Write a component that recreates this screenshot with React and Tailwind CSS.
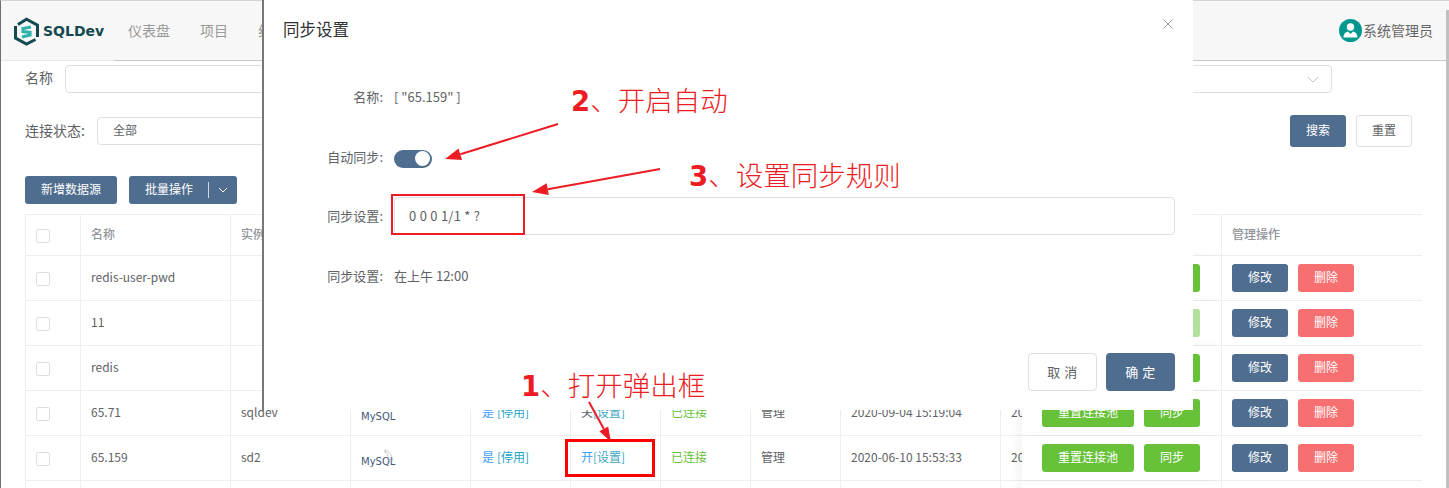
import React from "react";

const cols = "grid grid-cols-[55px_150px_120px_120px_100px_90px_90px_90px_160px_21px_200px_199px]";
const cell = "flex items-center px-[10px] pb-[2px] border-r border-[#ebeef5] min-w-0 whitespace-nowrap overflow-hidden";
const boxCell = "flex items-center px-[10px] pt-[2px] border-r border-[#ebeef5]";

function Check() {
  return <span className="block w-[14px] h-[14px] rounded-[2px] border border-[#dcdfe6] bg-white" />;
}

function Btn({ className = "", children }) {
  return (
    <button className={"h-[28px] pb-[2px] rounded-[3px] text-white text-[12px] flex items-center justify-center shrink-0 " + className}>
      {children}
    </button>
  );
}

function MySql({ fin }) {
  return (
    <div className="relative w-[36px] h-[24px] flex items-end">
      {fin && (
        <svg className="absolute left-[23px] top-[2px]" width="12" height="14" viewBox="0 0 12 14" fill="none">
          <path d="M1 1 C5 2 8 6 9 12 M1 1 C2 4 5 6 5 11 M1 1 L1 4" stroke="#b4b7c0" strokeWidth="0.7" />
        </svg>
      )}
      <span className="font-['DejaVu_Sans',sans-serif] text-[10px] leading-[11px] text-[#41597a] mb-[4px]">MySQL</span>
    </div>
  );
}

function Row({ name, inst, logo, fin, on, date, light }) {
  return (
    <div className={cols + " h-[45px] border-b border-[#ebeef5] text-[12px] text-[#606266]"}>
      <div className={boxCell}><Check /></div>
      <div className={cell}>{name}</div>
      <div className={cell}>{inst}</div>
      <div className={boxCell}>{logo && <MySql fin={fin} />}</div>
      <div className={cell + " pl-[11px]"}>
        {date && <><span className="text-[#409eff]">是</span><span className="text-[#1ba3c4] ml-[3px]">[停用]</span></>}
      </div>
      <div className={cell}>
        {date && <><span className={on ? "text-[#409eff]" : "text-[#606266]"}>{on ? "开" : "关"}</span><span className="text-[#3fa6c4]">[设置]</span></>}
      </div>
      <div className={cell + " text-[#67c23a]"}>{date && "已连接"}</div>
      <div className={cell}>{date && "管理"}</div>
      <div className={cell}>{date}</div>
      <div className={cell + " !overflow-visible border-r-0"}>{date && "2020"}</div>
      <div className="flex items-center gap-[10px] pl-[20px] bg-white border-r border-[#ebeef5] shadow-[-6px_0_8px_rgba(0,0,0,0.04)] z-10">
        <Btn className="w-[92px] bg-[#67c23a]">{date && "重置连接池"}</Btn>
        <Btn className={"w-[56px] " + (light ? "bg-[#b3e19d]" : "bg-[#67c23a]")}>{date && "同步"}</Btn>
      </div>
      <div className="flex items-center gap-[10px] pl-[10px]">
        <Btn className="w-[56px] bg-[#4f6d8e]">修改</Btn>
        <Btn className="w-[56px] bg-[#f76f70]">删除</Btn>
      </div>
    </div>
  );
}

function Arrow({ x1, y1, x2, y2, len = 16, half = 6, w = 2 }) {
  const dx = x2 - x1, dy = y2 - y1, d = Math.hypot(dx, dy);
  const ux = dx / d, uy = dy / d;
  const bx = x2 - ux * len, by = y2 - uy * len;
  const pts = `${x2},${y2} ${bx - uy * half},${by + ux * half} ${bx + uy * half},${by - ux * half}`;
  return (
    <g>
      <line x1={x1} y1={y1} x2={bx} y2={by} stroke="#ed1c24" strokeWidth={w} />
      <polygon points={pts} fill="#ed1c24" />
    </g>
  );
}

function Note({ className, n, text }) {
  return (
    <div className={"absolute whitespace-nowrap text-[27.5px] leading-[32px] font-light text-[#ed1c24] z-40 " + className}>
      <span className="font-['DejaVu_Sans',sans-serif] font-bold">{n}</span>、{text}
    </div>
  );
}

function FormRow({ label, className = "", children }) {
  return (
    <div className={"flex items-center h-[40px] " + className}>
      <div className="w-[119px] text-right text-[13px] text-[#606266] shrink-0">{label}:</div>
      <div className="flex-1 flex items-center ml-[11px] mr-[18px] text-[13px] text-[#606266]">{children}</div>
    </div>
  );
}

export default function App() {
  return (
    <div className="relative w-[1449px] h-[488px] overflow-hidden bg-white font-['Noto_Sans_CJK_SC','Noto_Sans',sans-serif]">
      <div className="h-full border-l border-t border-l-[#707070] border-t-[#d4d4d8] flex flex-col">
        {/* header */}
        <header className="h-[60px] shrink-0 bg-[#f7f7f7] border-b border-[#c9c9c9] flex items-center justify-between pr-[16px]">
          <div className="flex items-center h-full">
            <div className="w-[113px] h-[60px] -mb-px border-b border-[#e8e8e8] flex items-center pl-[12px] gap-[3px] pt-[1px]">
              <svg width="27" height="29" viewBox="0 0 27 29" fill="none">
                <path d="M5 7.5 L13.5 2.2 L24.5 8.2 V20 M22.5 22.5 L13.5 27 L2.5 21 V9" stroke="#134a50" strokeWidth="3" />
                <path d="M18 10 L10 11.5 V14.5 L17 15.5 V18 L9 20" stroke="#2db5ad" strokeWidth="3.2" />
              </svg>
              <span className="font-['DejaVu_Sans',sans-serif] font-bold text-[14px] text-[#134a50]">SQLDev</span>
            </div>
            <nav className="flex items-center gap-[30px] ml-[14px] text-[14px] text-[#999999]">
              <span>仪表盘</span>
              <span>项目</span>
              <span>组</span>
            </nav>
          </div>
          <div className="flex items-center gap-px text-[14px] text-[#666666]">
            <svg width="23" height="23" viewBox="0 0 23 23">
              <circle cx="11.5" cy="11.5" r="11.5" fill="#00978f" />
              <circle cx="11.5" cy="8" r="3.7" fill="#fff" />
              <path d="M4.5 18.5 C4.5 14.5 7 13 9 12.5 L11.5 15 L14 12.5 C16 13 18.5 14.5 18.5 18.5 Z" fill="#fff" />
            </svg>
            <span>系统管理员</span>
          </div>
        </header>

        <main className="pl-[24px] pr-[26px]">
          <div className="flex items-center mt-[4px] h-[28px]">
            <span className="text-[14px] text-[#606266] w-[40px] shrink-0 pb-[3px]">名称</span>
            <div className="flex-1 h-[28px] mr-[91px] border border-[#dcdfe6] rounded-[4px] flex items-center justify-end pr-[12px]">
              <svg width="12" height="7" viewBox="0 0 12 7" fill="none"><path d="M1 1 L6 6 L11 1" stroke="#c0c4cc" strokeWidth="1" /></svg>
            </div>
          </div>

          <div className="flex items-center justify-between mt-[22px] h-[32px]">
            <div className="flex items-center">
              <span className="text-[14px] text-[#606266] w-[72px] pb-[2px]">连接状态:</span>
              <div className="w-[300px] h-[28px] pb-[2px] border border-[#dcdfe6] rounded-[4px] pl-[15px] flex items-center text-[12px] text-[#606266]">全部</div>
            </div>
            <div className="flex items-center gap-[10px] mr-[11px]">
              <button className="w-[56px] h-[32px] pb-[2px] rounded-[3px] bg-[#4f6d8e] text-white text-[12px]">搜索</button>
              <button className="w-[56px] h-[32px] pb-[2px] rounded-[3px] border border-[#dcdfe6] bg-white text-[#606266] text-[12px]">重置</button>
            </div>
          </div>

          <div className="flex items-center gap-[12px] mt-[29px]">
            <Btn className="w-[92px] bg-[#4f6d8e]">新增数据源</Btn>
            <div className="w-[108px] h-[28px] rounded-[3px] bg-[#4f6d8e] text-white text-[12px] flex items-center pl-[16px]">
              <span className="w-[63px] pb-[2px]">批量操作</span>
              <span className="w-px h-[16px] bg-[#cfd8e2]" />
              <svg className="ml-[9px]" width="10" height="6" viewBox="0 0 10 6" fill="none"><path d="M1 1 L5 5 L9 1" stroke="#fff" strokeWidth="1" /></svg>
            </div>
          </div>

          <div className="mt-[10px] w-[1397px] border-l border-t border-[#ebeef5]">
            <div className={cols + " h-[41px] border-b border-[#ebeef5] text-[12px] text-[#909399] font-medium"}>
              <div className={boxCell}><Check /></div>
              <div className={cell}>名称</div>
              <div className={cell}>实例</div>
              <div className={cell} />
              <div className={cell} />
              <div className={cell} />
              <div className={cell} />
              <div className={cell} />
              <div className={cell} />
              <div className={cell + " border-r-0"} />
              <div className="bg-white border-r border-[#ebeef5]" />
              <div className="flex items-center pl-[10px] pb-[2px]">管理操作</div>
            </div>
            <Row name="redis-user-pwd" />
            <Row name="11" light />
            <Row name="redis" />
            <Row name="65.71" inst="sqldev" logo date="2020-09-04 15:19:04" />
            <Row name="65.159" inst="sd2" logo fin on date="2020-06-10 15:53:33" />
            <div className={cols + " h-[45px]"}>
              <div className={cell} /><div className={cell} /><div className={cell} /><div className={cell} /><div className={cell} />
              <div className={cell} /><div className={cell} /><div className={cell} /><div className={cell} /><div className={cell + " border-r-0"} />
              <div className="bg-white border-r border-[#ebeef5] shadow-[-6px_0_8px_rgba(0,0,0,0.04)]" /><div />
            </div>
          </div>
        </main>
      </div>

      {/* scrollbar */}
      <div className="absolute right-0 top-[10px] bottom-0 w-[3px] bg-[#c0c0c0]" />

      {/* dialog */}
      <div className="absolute left-[262px] top-0 w-[931px] h-[411px] z-20 flex flex-col">
        <div className="h-[410px] bg-white border-l-2 border-[#777777] flex flex-col">
          <div className="flex items-start justify-between pl-[19px] pr-[20px] pt-[17px]">
            <h2 className="text-[16.5px] leading-[24px] text-[#303133] font-normal">同步设置</h2>
            <svg className="mt-[2px]" width="10" height="10" viewBox="0 0 10 10" fill="none"><path d="M0.5 0.5 L9.5 9.5 M9.5 0.5 L0.5 9.5" stroke="#9a9da3" strokeWidth="1" /></svg>
          </div>
          <FormRow label="名称" className="mt-[36px]"><span>[ "65.159" ]</span></FormRow>
          <FormRow label="自动同步" className="mt-[20px]">
            <span className="flex items-center justify-end w-[38px] h-[18px] mt-[3px] rounded-full bg-[#4f6d8e] pr-[2px]">
              <span className="block w-[15px] h-[15px] rounded-full bg-white" />
            </span>
          </FormRow>
          <FormRow label="同步设置" className="mt-[19px]">
            <div className="flex-1 h-[38px] border border-[#dcdfe6] rounded-[4px] pl-[14px] flex items-center tracking-[0.25px]">0 0 0 1/1 * ?</div>
          </FormRow>
          <FormRow label="同步设置" className="mt-[20px]"><span>在上午 12:00</span></FormRow>
          <div className="flex justify-end gap-[9px] pr-[18px] mt-[57px]">
            <button className="w-[69px] h-[38px] rounded-[4px] border border-[#dcdfe6] bg-white text-[13px] tracking-[0.5px] text-[#606266]">取 消</button>
            <button className="w-[69px] h-[38px] rounded-[4px] bg-[#4f6d8e] text-[13px] tracking-[0.5px] text-white">确 定</button>
          </div>
        </div>
      </div>

      {/* annotations */}
      <div className="absolute left-[391px] top-[194px] w-[134px] h-[41px] border-2 border-[#ed1c24] z-30" />
      <div className="absolute left-[565px] top-[439px] w-[90px] h-[38px] border-[3px] border-[#ff0000] z-30" />
      <svg className="absolute inset-0 z-40 pointer-events-none" width="1449" height="488">
        <Arrow x1={589} y1={402} x2={611} y2={442} len={15} half={5} />
        <Arrow x1={558} y1={124} x2={445} y2={159} />
        <Arrow x1={660} y1={169} x2={532} y2={192} />
      </svg>
      <Note className="left-[521px] top-[368px]" n="1" text="打开弹出框" />
      <Note className="left-[571px] top-[83px]" n="2" text="开启自动" />
      <Note className="left-[689px] top-[158px]" n="3" text="设置同步规则" />
    </div>
  );
}
